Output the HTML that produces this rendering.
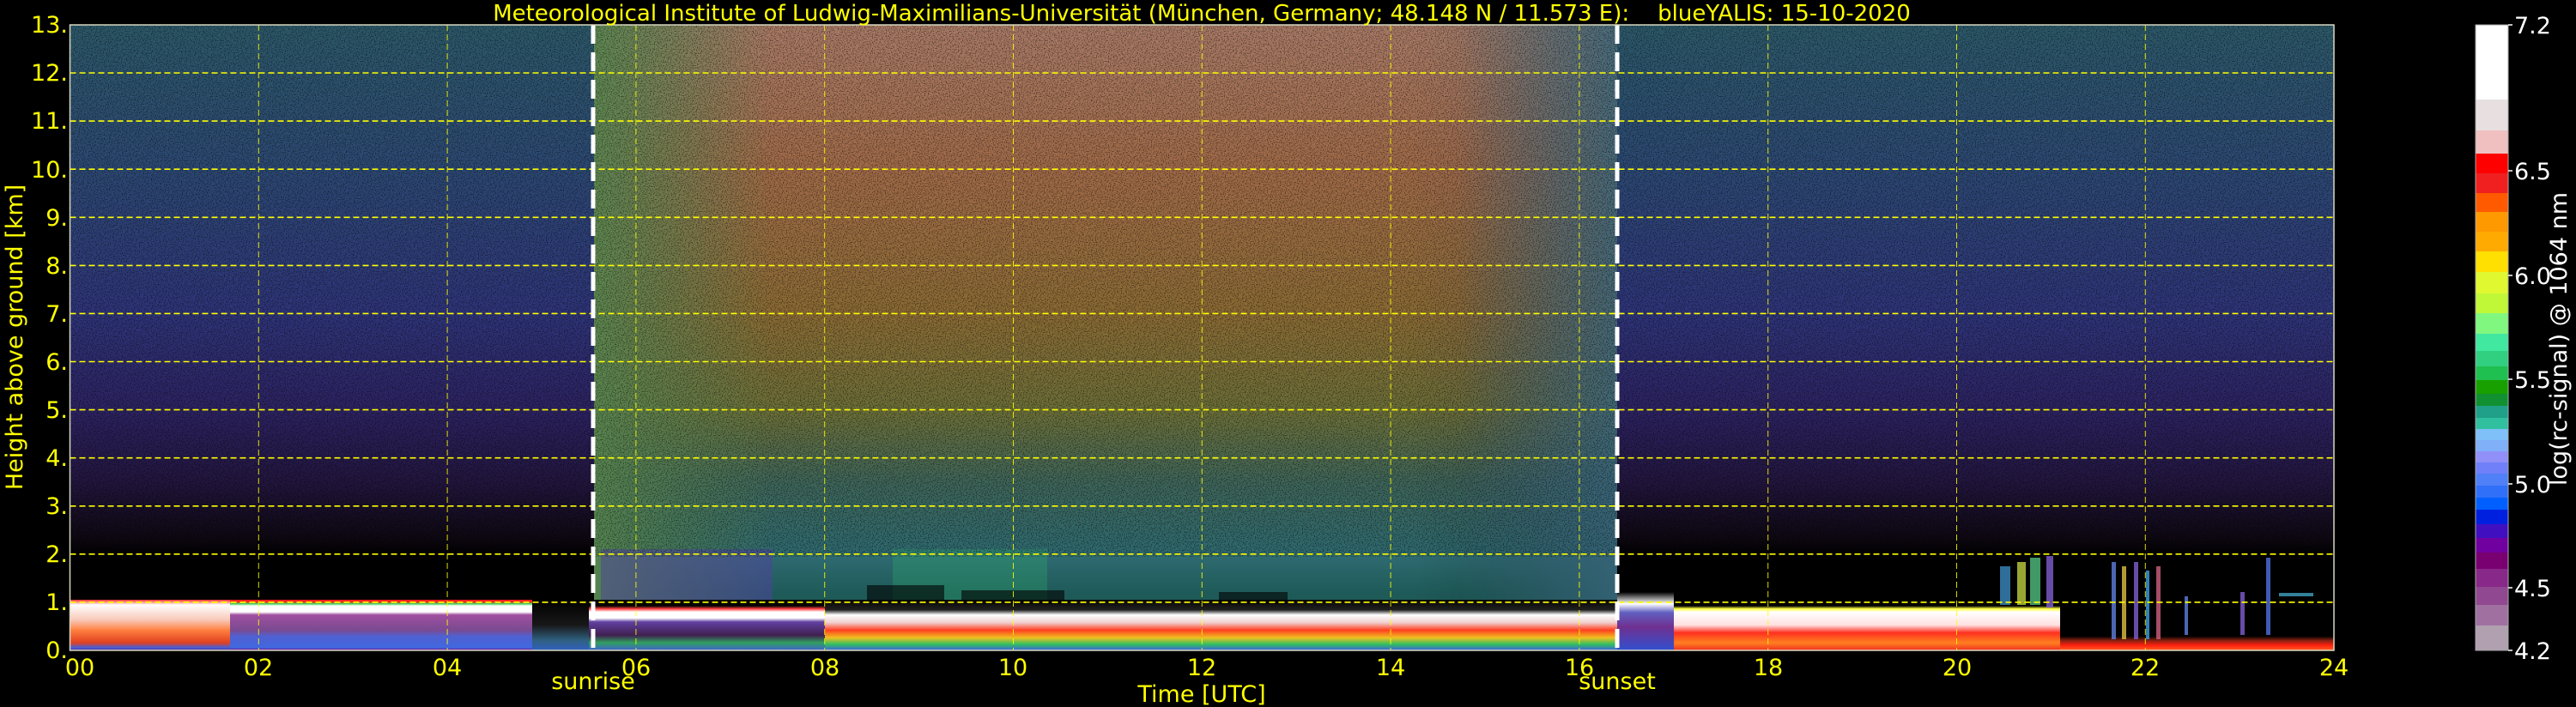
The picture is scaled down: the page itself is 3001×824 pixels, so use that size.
<!DOCTYPE html>
<html><head><meta charset="utf-8"><style>
html,body{margin:0;padding:0;background:#000;width:3001px;height:824px;overflow:hidden}
svg{display:block}
text{font-family:"DejaVu Sans","Liberation Sans",sans-serif}
</style></head><body>
<svg width="3001" height="824" viewBox="0 0 3001 824" xmlns="http://www.w3.org/2000/svg">
<defs>
<linearGradient id="night" x1="0" y1="29" x2="0" y2="758" gradientUnits="userSpaceOnUse">
<stop offset="0" stop-color="#2c5868"/><stop offset="0.23" stop-color="#2c4872"/>
<stop offset="0.46" stop-color="#2e3478"/><stop offset="0.62" stop-color="#2c2260"/>
<stop offset="0.73" stop-color="#22163e"/><stop offset="0.82" stop-color="#0e0812"/>
<stop offset="0.85" stop-color="#000"/><stop offset="1" stop-color="#000"/>
</linearGradient>
<linearGradient id="day" x1="0" y1="29" x2="0" y2="758" gradientUnits="userSpaceOnUse">
<stop offset="0" stop-color="#a87a66"/><stop offset="0.23" stop-color="#a06a48"/>
<stop offset="0.46" stop-color="#8a6a34"/><stop offset="0.62" stop-color="#6a6e38"/>
<stop offset="0.73" stop-color="#3e6458"/><stop offset="0.85" stop-color="#2e6a70"/>
<stop offset="0.91" stop-color="#1e5a58"/><stop offset="1" stop-color="#1e5a58"/>
</linearGradient>
<linearGradient id="edge" x1="692" y1="0" x2="900" y2="0" gradientUnits="userSpaceOnUse">
<stop offset="0" stop-color="#5a8a50" stop-opacity="0.9"/><stop offset="1" stop-color="#5a8a50" stop-opacity="0"/>
</linearGradient>
<linearGradient id="edge2" x1="1700" y1="0" x2="1884" y2="0" gradientUnits="userSpaceOnUse">
<stop offset="0" stop-color="#3a6a80" stop-opacity="0"/><stop offset="1" stop-color="#3a6a80" stop-opacity="0.8"/>
</linearGradient>
<linearGradient id="dayfade" x1="692" y1="0" x2="1884" y2="0" gradientUnits="userSpaceOnUse">
<stop offset="0" stop-color="#fff" stop-opacity="0.75"/><stop offset="0.06" stop-color="#fff" stop-opacity="0.9"/>
<stop offset="0.15" stop-color="#fff" stop-opacity="1"/><stop offset="0.8" stop-color="#fff" stop-opacity="1"/>
<stop offset="0.95" stop-color="#fff" stop-opacity="0.8"/><stop offset="1" stop-color="#fff" stop-opacity="0.7"/>
</linearGradient>
<mask id="dm" maskUnits="userSpaceOnUse" x="0" y="0" width="3001" height="824"><rect x="692" y="29" width="1192" height="729" fill="url(#dayfade)"/></mask>
<filter id="spk" x="0" y="0" width="100%" height="100%">
<feTurbulence type="fractalNoise" baseFrequency="0.8" numOctaves="1" seed="3"/>
<feColorMatrix type="matrix" values="0 0 0 0 0  0 0 0 0 0  0 0 0 0 0  6 0 0 0 -3"/>
</filter>
<linearGradient id="bA" x1="0" y1="699" x2="0" y2="758" gradientUnits="userSpaceOnUse">
<stop offset="0" stop-color="#ff3030"/><stop offset="0.1" stop-color="#ffffff"/><stop offset="0.4" stop-color="#f8c8b8"/>
<stop offset="0.6" stop-color="#ff8040"/><stop offset="0.85" stop-color="#e04020"/><stop offset="0.95" stop-color="#4060e0"/><stop offset="1" stop-color="#602080"/></linearGradient>
<linearGradient id="bB" x1="0" y1="699" x2="0" y2="758" gradientUnits="userSpaceOnUse">
<stop offset="0.04" stop-color="#ff2020"/><stop offset="0.08" stop-color="#40d060"/><stop offset="0.12" stop-color="#ffffff"/>
<stop offset="0.24" stop-color="#ffffff"/><stop offset="0.3" stop-color="#a050a0"/><stop offset="0.6" stop-color="#7a4a90"/>
<stop offset="0.72" stop-color="#5060d0"/><stop offset="0.95" stop-color="#4068e0"/><stop offset="1" stop-color="#800080"/></linearGradient>
<linearGradient id="bC" x1="0" y1="699" x2="0" y2="758" gradientUnits="userSpaceOnUse">
<stop offset="0" stop-color="#000"/><stop offset="0.5" stop-color="#181818"/><stop offset="0.8" stop-color="#306080"/><stop offset="1" stop-color="#3060c0"/></linearGradient>
<linearGradient id="bD" x1="0" y1="699" x2="0" y2="758" gradientUnits="userSpaceOnUse">
<stop offset="0.12" stop-color="#000"/><stop offset="0.18" stop-color="#ff4040"/><stop offset="0.24" stop-color="#fff"/>
<stop offset="0.36" stop-color="#fff"/><stop offset="0.44" stop-color="#6040a0"/><stop offset="0.7" stop-color="#402050"/>
<stop offset="0.85" stop-color="#30a060"/><stop offset="1" stop-color="#4060d0"/></linearGradient>
<linearGradient id="bE" x1="0" y1="699" x2="0" y2="758" gradientUnits="userSpaceOnUse">
<stop offset="0" stop-color="#050505"/><stop offset="0.2" stop-color="#202020"/><stop offset="0.3" stop-color="#fff"/>
<stop offset="0.45" stop-color="#f0d0d0"/><stop offset="0.6" stop-color="#ff4020"/><stop offset="0.75" stop-color="#f0c020"/>
<stop offset="0.88" stop-color="#30c060"/><stop offset="1" stop-color="#4060e0"/></linearGradient>
<linearGradient id="bF" x1="0" y1="690" x2="0" y2="758" gradientUnits="userSpaceOnUse">
<stop offset="0" stop-color="#000"/><stop offset="0.2" stop-color="#ffffff"/><stop offset="0.35" stop-color="#6060c0"/>
<stop offset="0.6" stop-color="#703090"/><stop offset="1" stop-color="#3050d0"/></linearGradient>
<linearGradient id="bG" x1="0" y1="699" x2="0" y2="758" gradientUnits="userSpaceOnUse">
<stop offset="0.12" stop-color="#000"/><stop offset="0.18" stop-color="#ffff40"/><stop offset="0.24" stop-color="#fff"/>
<stop offset="0.5" stop-color="#ffe0e0"/><stop offset="0.65" stop-color="#ff3020"/><stop offset="0.85" stop-color="#ff8020"/><stop offset="1" stop-color="#f03020"/></linearGradient>
<linearGradient id="bH" x1="0" y1="699" x2="0" y2="758" gradientUnits="userSpaceOnUse">
<stop offset="0.72" stop-color="#000"/><stop offset="0.8" stop-color="#802010"/><stop offset="0.9" stop-color="#ff2010"/><stop offset="1" stop-color="#ff6020"/></linearGradient>
</defs>

<rect x="81.5" y="29" width="2637.5" height="729" fill="url(#night)"/>
<rect x="81.5" y="29" width="2637.5" height="729" fill="url(#day)" mask="url(#dm)"/>
<rect x="692" y="29" width="208" height="670" fill="url(#edge)"/>
<rect x="1700" y="29" width="184" height="670" fill="url(#edge2)"/>
<rect x="700" y="640" width="200" height="60" fill="#5040a0" opacity="0.5"/>
<rect x="1040" y="640" width="180" height="60" fill="#30c070" opacity="0.25"/>
<rect x="81.5" y="29" width="2637.5" height="620" filter="url(#spk)" opacity="0.45"/>

<rect x="81.5" y="699" width="187" height="59" fill="url(#bA)"/>
<rect x="268" y="699" width="352" height="59" fill="url(#bB)"/>
<rect x="620" y="699" width="66" height="59" fill="url(#bC)"/>
<rect x="686" y="699" width="275" height="59" fill="url(#bD)"/>
<rect x="961" y="699" width="923" height="59" fill="url(#bE)"/>
<rect x="1884" y="690" width="66" height="68" fill="url(#bF)"/>
<rect x="1950" y="699" width="450" height="59" fill="url(#bG)"/>
<rect x="2400" y="699" width="319" height="59" fill="url(#bH)"/>
<rect x="1010" y="682" width="90" height="20" fill="#000" opacity="0.6"/>
<rect x="1120" y="688" width="120" height="16" fill="#000" opacity="0.6"/>
<rect x="1420" y="690" width="80" height="14" fill="#000" opacity="0.6"/>
<g opacity="0.8">
<rect x="2330" y="660" width="12" height="45" fill="#3a8ac0"/>
<rect x="2350" y="655" width="10" height="50" fill="#c0d040"/>
<rect x="2365" y="650" width="12" height="55" fill="#50c080"/>
<rect x="2384" y="648" width="8" height="60" fill="#8060d0"/>
<rect x="2460" y="655" width="5" height="90" fill="#6080e0"/>
<rect x="2472" y="660" width="5" height="85" fill="#e0c040"/>
<rect x="2486" y="655" width="5" height="90" fill="#8060d0"/>
<rect x="2500" y="665" width="4" height="80" fill="#40a0e0"/>
<rect x="2512" y="660" width="5" height="85" fill="#d06080"/>
<rect x="2545" y="695" width="4" height="45" fill="#6080e0"/>
<rect x="2610" y="690" width="5" height="50" fill="#8060d0"/>
<rect x="2640" y="650" width="5" height="90" fill="#5070e0"/>
<rect x="2655" y="691" width="40" height="4" fill="#40a0c0"/>
</g>

<g stroke="#ffff00" stroke-width="1.6" stroke-dasharray="7,4" fill="none">
<line x1="81.5" x2="2719" y1="701.9" y2="701.9"/><line x1="81.5" x2="2719" y1="645.8" y2="645.8"/>
<line x1="81.5" x2="2719" y1="589.8" y2="589.8"/><line x1="81.5" x2="2719" y1="533.7" y2="533.7"/>
<line x1="81.5" x2="2719" y1="477.6" y2="477.6"/><line x1="81.5" x2="2719" y1="421.5" y2="421.5"/>
<line x1="81.5" x2="2719" y1="365.4" y2="365.4"/><line x1="81.5" x2="2719" y1="309.4" y2="309.4"/>
<line x1="81.5" x2="2719" y1="253.3" y2="253.3"/><line x1="81.5" x2="2719" y1="197.2" y2="197.2"/>
<line x1="81.5" x2="2719" y1="141.1" y2="141.1"/><line x1="81.5" x2="2719" y1="85" y2="85"/>
</g>
<g stroke="#ffff00" stroke-width="1" stroke-dasharray="7,4" fill="none" opacity="0.85">
<line y1="29" y2="758" x1="301.3" x2="301.3"/><line y1="29" y2="758" x1="521.1" x2="521.1"/>
<line y1="29" y2="758" x1="740.9" x2="740.9"/><line y1="29" y2="758" x1="960.7" x2="960.7"/>
<line y1="29" y2="758" x1="1180.5" x2="1180.5"/><line y1="29" y2="758" x1="1400.3" x2="1400.3"/>
<line y1="29" y2="758" x1="1620.1" x2="1620.1"/><line y1="29" y2="758" x1="1839.9" x2="1839.9"/>
<line y1="29" y2="758" x1="2059.7" x2="2059.7"/><line y1="29" y2="758" x1="2279.5" x2="2279.5"/>
<line y1="29" y2="758" x1="2499.3" x2="2499.3"/>
</g>
<g stroke="#fff" stroke-width="5" stroke-dasharray="22,10">
<line x1="691" x2="691" y1="29" y2="758"/><line x1="1884" x2="1884" y1="29" y2="758"/>
</g>
<rect x="81.5" y="29" width="2637.5" height="729" fill="none" stroke="#d8d8c0" stroke-width="1.5"/>

<text x="1400" y="24" fill="#ffff00" font-size="26" text-anchor="middle" xml:space="preserve">Meteorological Institute of Ludwig-Maximilians-Universität (München, Germany; 48.148 N / 11.573 E):    blueYALIS: 15-10-2020</text>

<g fill="#ffff00" font-size="27" text-anchor="end">
<text x="79" y="767">0.</text><text x="79" y="711">1.</text><text x="79" y="655">2.</text><text x="79" y="599">3.</text>
<text x="79" y="543">4.</text><text x="79" y="487">5.</text><text x="79" y="431">6.</text><text x="79" y="375">7.</text>
<text x="79" y="319">8.</text><text x="79" y="263">9.</text><text x="79" y="207">10.</text><text x="79" y="150">11.</text>
<text x="79" y="94">12.</text><text x="79" y="38">13.</text>
</g>
<text transform="translate(26,393) rotate(-90)" fill="#ffff00" font-size="27" text-anchor="middle">Height above ground [km]</text>

<g fill="#ffff00" font-size="27" text-anchor="middle">
<text x="93" y="787">00</text><text x="301" y="787">02</text><text x="521" y="787">04</text><text x="741" y="787">06</text>
<text x="961" y="787">08</text><text x="1180" y="787">10</text><text x="1400" y="787">12</text><text x="1620" y="787">14</text>
<text x="1840" y="787">16</text><text x="2060" y="787">18</text><text x="2280" y="787">20</text><text x="2499" y="787">22</text>
<text x="2719" y="787">24</text>
<text x="691" y="803">sunrise</text><text x="1884" y="803">sunset</text>
<text x="1400" y="818">Time [UTC]</text>
</g>

<g>
<rect x="2884" y="29" width="38" height="87" fill="#ffffff"/>
<rect x="2884" y="116" width="38" height="36" fill="#e8e0e0"/>
<rect x="2884" y="152" width="38" height="27" fill="#f0c0c0"/>
<rect x="2884" y="179" width="38" height="23" fill="#ff0000"/>
<rect x="2884" y="202" width="38" height="23" fill="#f02020"/>
<rect x="2884" y="225" width="38" height="22" fill="#ff5a00"/>
<rect x="2884" y="247" width="38" height="23" fill="#ff9900"/>
<rect x="2884" y="270" width="38" height="23" fill="#ffaa00"/>
<rect x="2884" y="293" width="38" height="24" fill="#ffe000"/>
<rect x="2884" y="317" width="38" height="25" fill="#e0f830"/>
<rect x="2884" y="342" width="38" height="23" fill="#c0f838"/>
<rect x="2884" y="365" width="38" height="24" fill="#80f880"/>
<rect x="2884" y="389" width="38" height="20" fill="#40e8a0"/>
<rect x="2884" y="409" width="38" height="18" fill="#30d080"/>
<rect x="2884" y="427" width="38" height="16" fill="#20c050"/>
<rect x="2884" y="443" width="38" height="16" fill="#18a000"/>
<rect x="2884" y="459" width="38" height="14" fill="#109030"/>
<rect x="2884" y="473" width="38" height="14" fill="#20a088"/>
<rect x="2884" y="487" width="38" height="13" fill="#30c0a0"/>
<rect x="2884" y="500" width="38" height="13" fill="#80c0f8"/>
<rect x="2884" y="513" width="38" height="13" fill="#80b0f8"/>
<rect x="2884" y="526" width="38" height="13" fill="#9090f8"/>
<rect x="2884" y="539" width="38" height="13" fill="#7080f8"/>
<rect x="2884" y="552" width="38" height="14" fill="#5080f8"/>
<rect x="2884" y="566" width="38" height="14" fill="#3070f8"/>
<rect x="2884" y="580" width="38" height="14" fill="#0060ff"/>
<rect x="2884" y="594" width="38" height="17" fill="#0020e0"/>
<rect x="2884" y="611" width="38" height="16" fill="#4010c0"/>
<rect x="2884" y="627" width="38" height="17" fill="#7000a0"/>
<rect x="2884" y="644" width="38" height="19" fill="#780070"/>
<rect x="2884" y="663" width="38" height="21" fill="#882888"/>
<rect x="2884" y="684" width="38" height="21" fill="#904890"/>
<rect x="2884" y="705" width="38" height="24" fill="#a070a0"/>
<rect x="2884" y="729" width="38" height="29" fill="#b0a0b0"/>
<rect x="2884" y="29" width="38" height="729" fill="none" stroke="#aaa" stroke-width="1"/>
</g>
<g stroke="#fff" stroke-width="1.5">
<line x1="2922" x2="2927" y1="29" y2="29"/><line x1="2922" x2="2927" y1="199" y2="199"/>
<line x1="2922" x2="2927" y1="321" y2="321"/><line x1="2922" x2="2927" y1="442" y2="442"/>
<line x1="2922" x2="2927" y1="564" y2="564"/><line x1="2922" x2="2927" y1="685" y2="685"/>
<line x1="2922" x2="2927" y1="758" y2="758"/>
</g>
<g fill="#fff" font-size="27">
<text x="2929" y="39">7.2</text><text x="2929" y="209">6.5</text><text x="2929" y="331">6.0</text>
<text x="2929" y="452">5.5</text><text x="2929" y="574">5.0</text><text x="2929" y="695">4.5</text>
<text x="2929" y="768">4.2</text>
</g>
<text transform="translate(2990,395) rotate(-90)" fill="#fff" font-size="27" text-anchor="middle">log(rc-signal) @ 1064 nm</text>
</svg>
</body></html>
